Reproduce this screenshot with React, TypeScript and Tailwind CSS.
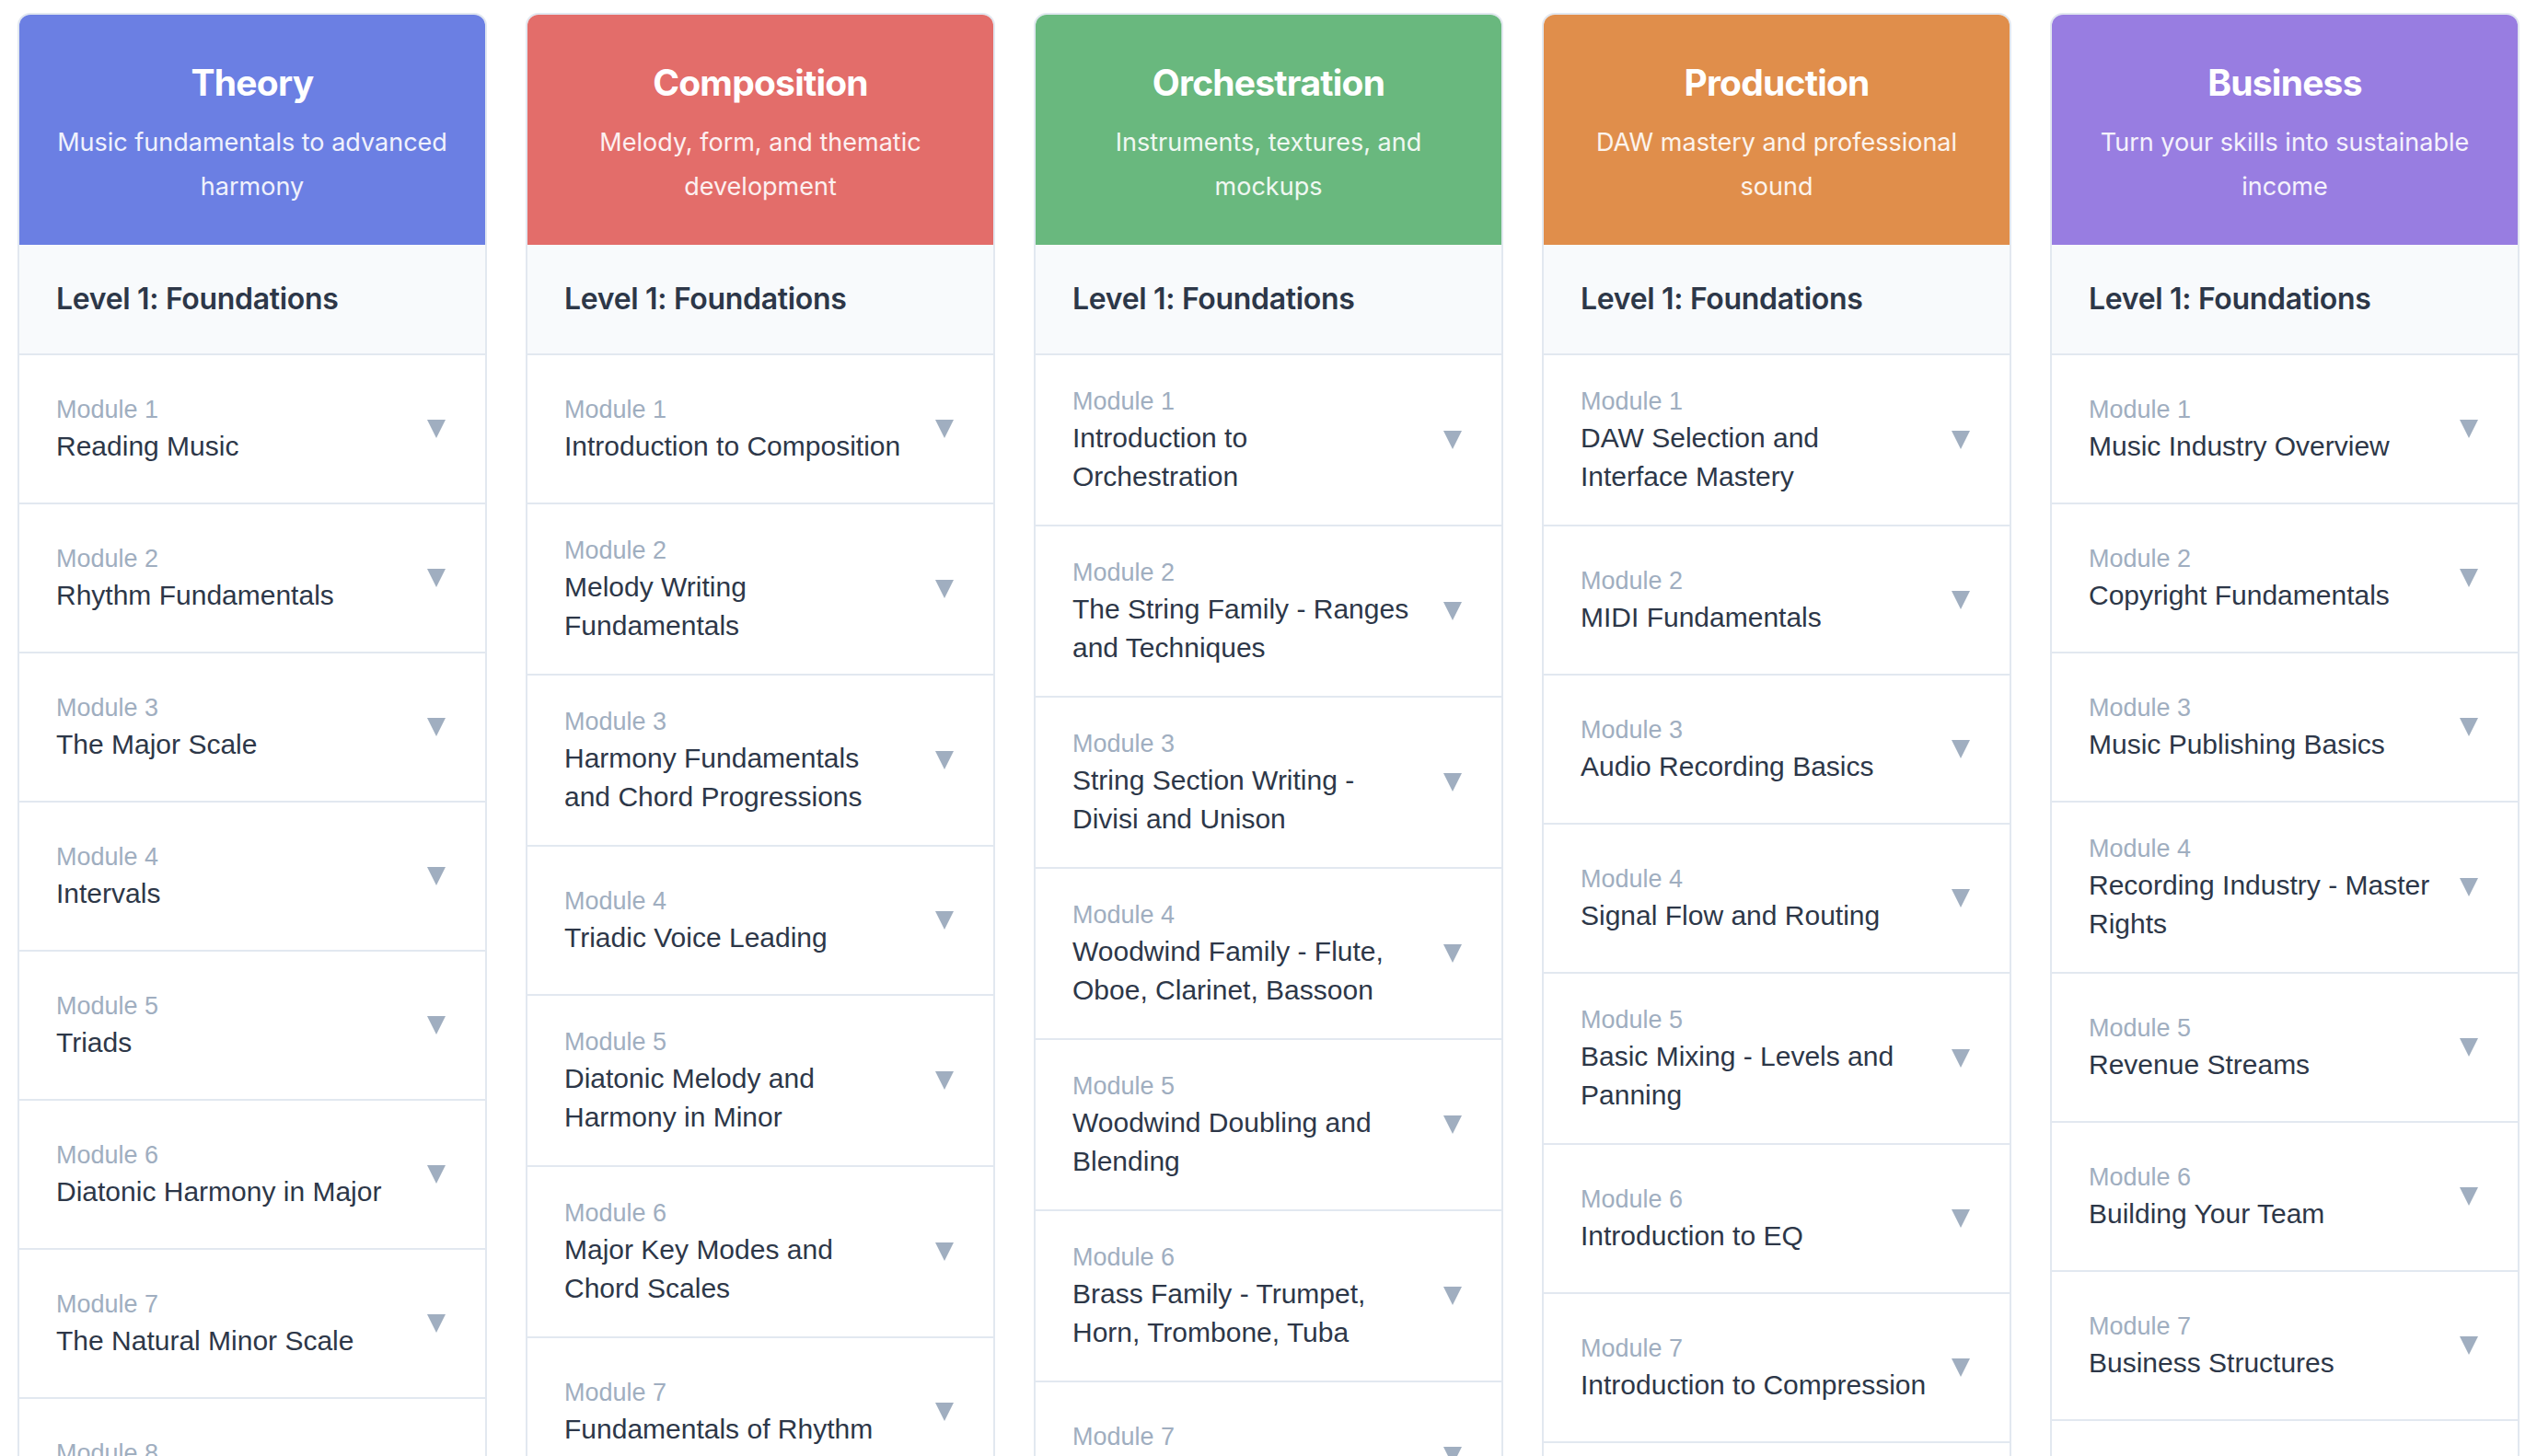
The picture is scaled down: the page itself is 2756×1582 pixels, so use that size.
import React from "react";

type Track = {
  name: string;
  tagline: string;
  color: string;
  modules: string[];
};

const tracks: Track[] = [
  {
    name: "Theory",
    tagline: "Music fundamentals to advanced harmony",
    color: "bg-[#6b7fe3]",
    modules: [
      "Reading Music",
      "Rhythm Fundamentals",
      "The Major Scale",
      "Intervals",
      "Triads",
      "Diatonic Harmony in Major",
      "The Natural Minor Scale",
      "Minor Key Harmony",
    ],
  },
  {
    name: "Composition",
    tagline: "Melody, form, and thematic development",
    color: "bg-[#e36d6a]",
    modules: [
      "Introduction to Composition",
      "Melody Writing Fundamentals",
      "Harmony Fundamentals and Chord Progressions",
      "Triadic Voice Leading",
      "Diatonic Melody and Harmony in Minor",
      "Major Key Modes and Chord Scales",
      "Fundamentals of Rhythm",
      "Phrase Structure",
    ],
  },
  {
    name: "Orchestration",
    tagline: "Instruments, textures, and mockups",
    color: "bg-[#69b87e]",
    modules: [
      "Introduction to Orchestration",
      "The String Family - Ranges and Techniques",
      "String Section Writing - Divisi and Unison",
      "Woodwind Family - Flute, Oboe, Clarinet, Bassoon",
      "Woodwind Doubling and Blending",
      "Brass Family - Trumpet, Horn, Trombone, Tuba",
      "Brass Section Voicing",
    ],
  },
  {
    name: "Production",
    tagline: "DAW mastery and professional sound",
    color: "bg-[#e08e4b]",
    modules: [
      "DAW Selection and Interface Mastery",
      "MIDI Fundamentals",
      "Audio Recording Basics",
      "Signal Flow and Routing",
      "Basic Mixing - Levels and Panning",
      "Introduction to EQ",
      "Introduction to Compression",
      "Reverb and Delay",
    ],
  },
  {
    name: "Business",
    tagline: "Turn your skills into sustainable income",
    color: "bg-[#987de1]",
    modules: [
      "Music Industry Overview",
      "Copyright Fundamentals",
      "Music Publishing Basics",
      "Recording Industry - Master Rights",
      "Revenue Streams",
      "Building Your Team",
      "Business Structures",
      "Contracts and Negotiation",
    ],
  },
];

function Caret() {
  return (
    <svg width="20" height="20" viewBox="0 0 20 20" className="shrink-0 text-[#a0aec0]">
      <path d="M0 0 H20 L10 20 Z" fill="currentColor" />
    </svg>
  );
}

function ModuleRow({ index, title }: { index: number; title: string }) {
  return (
    <div className="flex min-h-[162px] items-center justify-between border-b-2 border-[#e2e8f0] py-[31px] pl-[40px] pr-[43px]">
      <div className="w-[377px] font-['Liberation_Sans',Arial,sans-serif]">
        <div className="text-[27px] leading-[38px] text-[#a0aec0]">Module {index}</div>
        <div className="text-[30px] leading-[42px] text-[#2d3748]">{title}</div>
      </div>
      <Caret />
    </div>
  );
}

function TrackColumn({ track }: { track: Track }) {
  return (
    <section className="overflow-hidden rounded-[14px] border-2 border-[#e2e8f0] bg-white">
      <header className={`${track.color} px-[28px] pb-[39px] pt-[50px] text-center text-white`}>
        <h2 className="text-[39px] font-bold leading-[48px] tracking-[-0.02em]">{track.name}</h2>
        <p className="mt-[17px] text-[27px] leading-[48px] text-white/90">{track.tagline}</p>
      </header>
      <div className="border-b-2 border-[#e2e8f0] bg-[#f8fafc] px-[40px] py-[39px]">
        <h3 className="text-[32px] font-semibold leading-[40px] tracking-[-0.01em] text-[#2d3748]">
          Level 1: Foundations
        </h3>
      </div>
      {track.modules.map((m, i) => (
        <ModuleRow key={m} index={i + 1} title={m} />
      ))}
    </section>
  );
}

export default function App() {
  return (
    <div className="min-h-screen bg-white px-[19px] pt-[14px] font-['Inter','Noto_Sans',sans-serif]">
      <div className="grid grid-cols-5 items-start gap-[42px]">
        {tracks.map((t) => (
          <TrackColumn key={t.name} track={t} />
        ))}
      </div>
    </div>
  );
}
